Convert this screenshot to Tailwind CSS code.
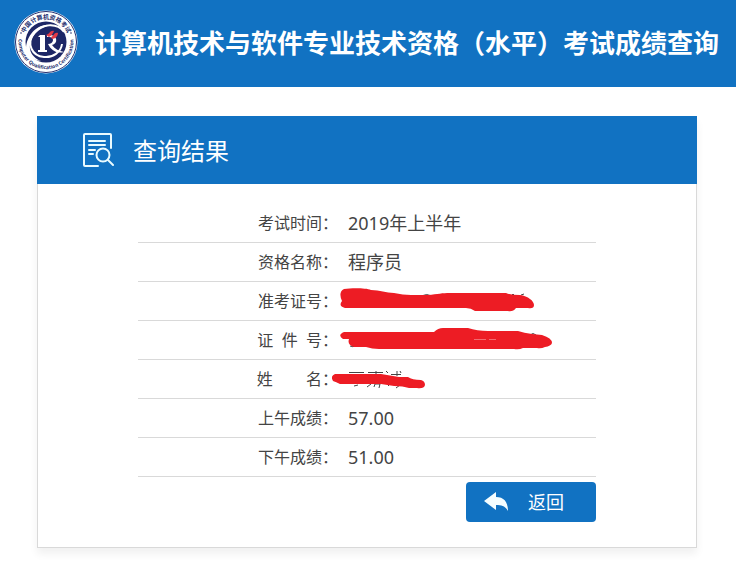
<!DOCTYPE html>
<html lang="zh-CN">
<head>
<meta charset="utf-8">
<meta name="viewport" content="width=device-width, initial-scale=1">
<title>计算机技术与软件专业技术资格（水平）考试成绩查询</title>
<script src="https://cdn.jsdelivr.net/npm/@tailwindcss/browser@4"></script>
</head>
<body class="bg-white font-['Noto_Sans','Noto_Sans_CJK_SC',sans-serif] text-[#444]">
<header class="flex h-[87px] items-center gap-[17px] bg-[#1172c2] pl-[14px] text-white">
  <svg class="mb-1 size-16 shrink-0" viewBox="0 0 64 64" role="img" aria-label="Computer Qualification Certification">
    <defs>
      <path id="arcTop" d="M9 32a23 23 0 0 1 46 0"/>
      <path id="arcBottom" d="M5.600 24A27.500 27.500 0 1 0 58.400 24"/>
    </defs>
    <circle cx="32" cy="32" r="31.500" fill="#fff"/>
    <circle cx="32" cy="32" r="30.500" fill="none" stroke="#25306f" stroke-width="1"/>
    <circle cx="32" cy="32" r="20.500" fill="#1d2766"/>
    <path d="M50 22C43 12 27 14 20 23C12 34 18 46 30 47C39 48 47 42 48 34" fill="none" stroke="#fff" stroke-width="2"/>
    <path d="M12 38C13 24 24 13 38 15C25 17 15 27 16 39C17 45 22 49 27 51C18 50 12 45 12 38Z" fill="#fff"/>
    <path d="M26 25h5v15h2v2h-9v-2h2v-13h-2ZM33 25h3c8 0 8 9 2 10c3 4 7 6 12 7c-8 2-13-2-16-8c6 0 7-7 1-7h-2Z" fill="#fff"/>
    <path d="M32 25c4-1 4-5 8-4c-1 3-3 5-5 6ZM37 27c3-1 3-5 7-4c0 3-3 6-6 6Z" fill="#e23a45"/>
    <text font-size="6" font-weight="700" fill="#25306f" text-anchor="middle"><textPath href="#arcTop" startOffset="50%">中国计算机资格考试</textPath></text>
    <text font-size="5" font-weight="700" fill="#25306f" text-anchor="middle"><textPath href="#arcBottom" startOffset="50%">Computer Qualification Certification</textPath></text>
    <circle cx="7" cy="23" r="0.800" fill="#25306f"/><circle cx="57" cy="23" r="0.800" fill="#25306f"/>
  </svg>
  <h1 class="whitespace-nowrap text-[26px] leading-[39px] font-bold">计算机技术与软件专业技术资格（水平）考试成绩查询</h1>
</header>

<main class="mr-[39px] mb-5 ml-[37px] mt-[29px] shadow-[0_6px_8px_rgba(0,0,0,0.06)]">
  <div class="flex h-[68px] items-center gap-[19px] bg-[#1172c2] pl-[45px] text-white">
    <svg class="h-9 w-8" viewBox="0 0 32 36" fill="none" stroke="#e9fbff" stroke-width="2" stroke-linecap="round" stroke-linejoin="round" aria-hidden="true">
      <path d="M29 16V3a1 1 0 0 0-1-1H3a1 1 0 0 0-1 1v30a1 1 0 0 0 1 1h13"/>
      <path d="M7 9h16M7 13h16M7 18h6M7 22h4"/>
      <circle cx="21" cy="23" r="6.500"/>
      <path d="M26 28l5 5"/>
    </svg>
    <h2 class="pt-[2px] text-2xl">查询结果</h2>
  </div>
  <div class="border border-t-0 border-[#d9d9d9] bg-white px-[100px] pt-5 pb-[25px]">
    <table class="w-full border-collapse text-lg leading-[38px]">
      <tbody>
        <tr class="border-b border-[#d9d9d9]"><th scope="row" class="w-[200px] p-0 text-right text-base leading-[38px] font-normal">考试时间：</th><td class="py-0 pr-0 pl-[10px]">2019年上半年</td></tr>
        <tr class="border-b border-[#d9d9d9]"><th scope="row" class="p-0 text-right text-base leading-[38px] font-normal">资格名称：</th><td class="py-0 pr-0 pl-[10px]">程序员</td></tr>
        <tr class="border-b border-[#d9d9d9]"><th scope="row" class="p-0 text-right text-base leading-[38px] font-normal">准考证号：</th>
          <td class="relative p-0"><svg class="absolute top-0 left-0 h-[38px] w-[220px]" viewBox="338 282 220 38" role="img" aria-label="已遮盖">
            <path d="M423 295.500q4-2 7 0M512 294.500h2M521 295l3-1" stroke="#444" fill="none"/>
            <path d="M344 289C352 288 366 288 371 290C380 290 386 293 394 293Q403 295 411 295H428C438 294 442 293 450 293H506Q511 295 520 295C528 296 534 301 534 305Q534 309 528 308H516Q513 312 508 311H475Q471 308 466 308H345Q338 306 342 301Q338 292 344 289Z" fill="#ed1c24"/>
          </svg></td></tr>
        <tr class="border-b border-[#d9d9d9]"><th scope="row" class="p-0 text-right text-base leading-[38px] font-normal">证&nbsp;&nbsp;件&nbsp;&nbsp;号：</th>
          <td class="relative p-0"><svg class="absolute top-0 left-0 h-[38px] w-[220px]" viewBox="338 321 220 38" role="img" aria-label="已遮盖">
            <path d="M350 346q3 2 6-1M530 335q3-3 6 0" stroke="#444" fill="none"/>
            <path d="M344 332H434Q438 328 443 328H468Q477 331 488 331H518Q524 333 532 334L542 335Q552 338 552 343Q551 346 545 347Q541 349 537 348H523Q519 350 514 349H379Q372 349 366 347H354Q347 345 349 339H343Q337 335 344 332Z" fill="#ed1c24"/>
            <path d="M474 339.500h12m3 0h7" stroke="#f26b70"/>
          </svg></td></tr>
        <tr class="border-b border-[#d9d9d9]"><th scope="row" class="p-0 text-right text-base leading-[38px] font-normal">姓&nbsp;&nbsp;&nbsp;&nbsp;&nbsp;&nbsp;&nbsp;&nbsp;名：</th>
          <td class="relative p-0"><svg class="absolute top-0 -left-2 h-[38px] w-[110px]" viewBox="330 360 110 38" role="img" aria-label="已遮盖">
            <path d="M349 372.500h15M368 372.500h15M376 371v4M386 371l2 2M391 374.500h10M397 371v5M400 371l1 2M354 386l4-1M367 387l4-3M374 387l1-3h5l-1 4M388 386l2-2M396 388l4-3" stroke="#444" fill="none"/>
            <path d="M335 374H381L399 377H408Q412 380 421 380Q425 381 425 385Q424 389 417 388H409Q403 386 394 386L381 384H340Q336 382 333 381Q330 376 335 374Z" fill="#ed1c24"/>
          </svg></td></tr>
        <tr class="border-b border-[#d9d9d9]"><th scope="row" class="p-0 text-right text-base leading-[38px] font-normal">上午成绩：</th><td class="py-0 pr-0 pl-[10px]">57.00</td></tr>
        <tr class="border-b border-[#d9d9d9]"><th scope="row" class="p-0 text-right text-base leading-[38px] font-normal">下午成绩：</th><td class="py-0 pr-0 pl-[10px]">51.00</td></tr>
      </tbody>
    </table>
    <div class="mt-[5px] flex justify-end">
      <button type="button" class="flex h-10 w-[130px] items-center gap-5 rounded-[4px] bg-[#1172c2] pl-[18px] text-lg text-white">
        <svg class="h-5 w-6" viewBox="0 0 24 20" fill="#f4fdff" aria-hidden="true"><path d="M0 9L12 0V5C20 5 24 10 24 19C21 14 18 13 12 13V18Z"/></svg>
        <span>返回</span>
      </button>
    </div>
  </div>
</main>
</body>
</html>
